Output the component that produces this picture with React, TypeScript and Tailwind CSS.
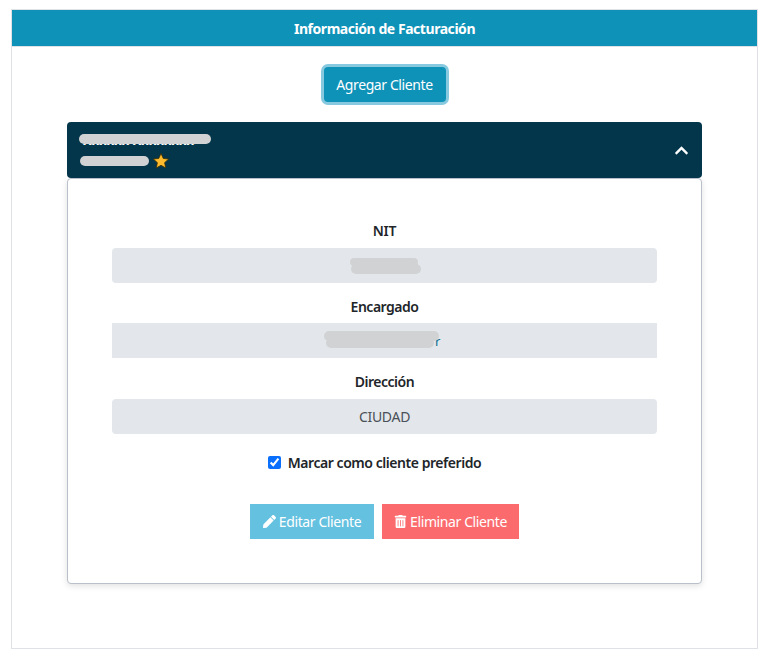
import { FaPen, FaTrashAlt, FaChevronUp } from "react-icons/fa";

const font = { fontFamily: '"Noto Sans", "Open Sans", sans-serif' };

function Blob({ className }: { className: string }) {
  return <span className={`absolute rounded-full bg-[#d1d2d4] ${className}`} />;
}

export default function App() {
  return (
    <div className="min-h-[665px] bg-white pt-[9px] px-[11px] text-[#212529]" style={font}>
      <div className="h-[640px] w-[747px] border border-[#dee2e6] flex flex-col items-center">
        <div className="h-[37px] w-full shrink-0 bg-[#0f92b8] border-b border-[#dee2e6] flex items-center justify-center text-[14px] font-bold tracking-[-0.45px] text-white">
          Información de Facturación
        </div>
        <button className="mt-[20px] h-[35px] w-[122px] rounded-[4px] bg-[#0f92b8] text-[14px] tracking-[-0.4px] text-white ring-[3px] ring-[#87c9df]">
          Agregar Cliente
        </button>
        <div className="mt-[20px] w-[635px] flex flex-col">
          <div className="relative h-[56px] rounded-[4px] bg-[#03364a] flex items-center justify-end pr-[13px]">
            <span className="absolute left-[16px] top-[9px] text-[13px] font-bold leading-[18px] text-white">Xxxxxx Xxxxxxxx</span>
            <Blob className="left-[12px] top-[12px] h-[10px] w-[132px]" />
            <Blob className="left-[13px] top-[34px] h-[10px] w-[69px]" />
            <svg className="absolute left-[85px] top-[30px]" width="18" height="18" viewBox="0 0 24 24">
              <path d="M12 2l3 6.6 7.2.8-5.4 4.8 1.5 7.1-6.3-3.6-6.3 3.6 1.5-7.1L1.8 9.4 9 8.6z" fill="#fdbb2d" stroke="#3a2c00" strokeWidth="1" />
            </svg>
            <FaChevronUp className="text-white" size={15} />
          </div>
          <div className="h-[406px] rounded-[4px] border border-[#b9c0ca] bg-white shadow-[0_2px_6px_rgba(0,0,0,0.12)] px-[44px] flex flex-col items-center">
            <div className="mt-[41px] h-[22px] text-[14px] font-semibold leading-[22px] tracking-[-0.3px]">NIT</div>
            <div className="relative mt-[6px] h-[35px] w-[545px] rounded-[4px] bg-[#e3e7eb]">
              <Blob className="left-[238px] top-[10px] h-[8px] w-[68px]" />
              <Blob className="left-[239px] top-[16px] h-[10px] w-[70px]" />
            </div>
            <div className="mt-[13px] h-[22px] text-[14px] font-semibold leading-[22px] tracking-[-0.5px]">Encargado</div>
            <div className="relative mt-[5px] h-[35px] w-[545px] bg-[#e3e7eb] text-[13px] text-[#0f6f8f]">
              <span className="absolute left-[323px] top-[9px] leading-[18px]">r</span>
              <Blob className="left-[212px] top-[8px] h-[10px] w-[115px]" />
              <Blob className="left-[214px] top-[15px] h-[10px] w-[108px]" />
            </div>
            <div className="mt-[13px] h-[22px] text-[14px] font-semibold leading-[22px] tracking-[-0.5px]">Dirección</div>
            <div className="mt-[6px] h-[35px] w-[545px] rounded-[4px] bg-[#e3e7eb] flex items-center justify-center text-[14px] tracking-[-0.3px] text-[#495057]">
              CIUDAD
            </div>
            <label className="mt-[17px] mr-[20px] flex h-[22px] items-center gap-[7px] text-[14px] font-semibold tracking-[-0.45px]">
              <input type="checkbox" defaultChecked className="h-[13px] w-[13px] accent-[#0b6ffd]" />
              Marcar como cliente preferido
            </label>
            <div className="mt-[31px] flex gap-[8px] text-[14px] tracking-[-0.4px] text-white">
              <button className="h-[35px] w-[124px] bg-[#64c1df] flex items-center justify-center gap-[3px]">
                <FaPen size={13} />
                Editar Cliente
              </button>
              <button className="h-[35px] w-[137px] bg-[#fb6b6e] flex items-center justify-center gap-[3px]">
                <FaTrashAlt size={13} />
                Eliminar Cliente
              </button>
            </div>
          </div>
        </div>
      </div>
    </div>
  );
}
